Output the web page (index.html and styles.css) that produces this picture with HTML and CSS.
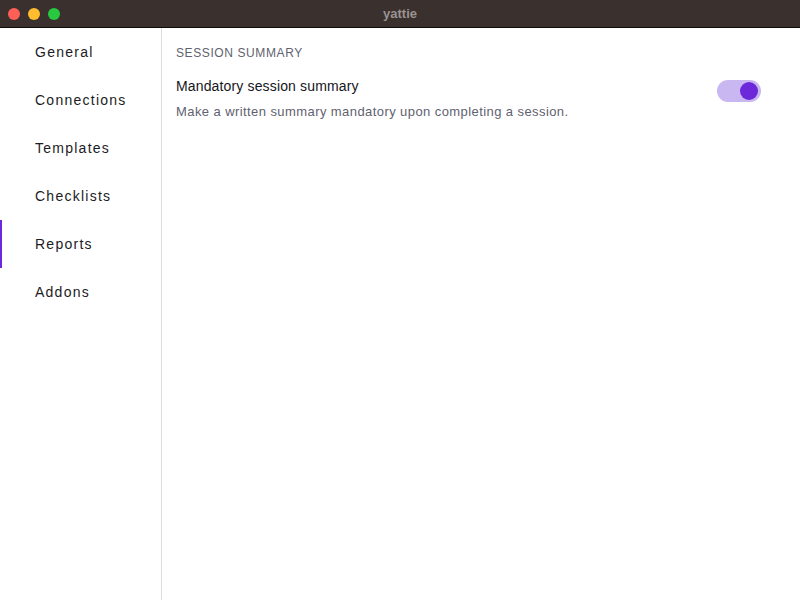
FILE: index.html
```html
<!DOCTYPE html>
<html>
<head>
<meta charset="utf-8">
<link rel="stylesheet" href="styles.css">
</head>
<body>
<div class="window">
  <div class="titlebar">
    <div class="lights">
      <span class="light red"></span>
      <span class="light yellow"></span>
      <span class="light green"></span>
    </div>
    <div class="title">yattie</div>
  </div>
  <div class="main">
    <nav class="sidebar">
      <div class="nav-item">General</div>
      <div class="nav-item">Connections</div>
      <div class="nav-item">Templates</div>
      <div class="nav-item">Checklists</div>
      <div class="nav-item active">Reports</div>
      <div class="nav-item">Addons</div>
    </nav>
    <section class="content">
      <h2 class="section-title">SESSION SUMMARY</h2>
      <div class="setting">
        <div class="setting-text">
          <div class="setting-label">Mandatory session summary</div>
          <div class="setting-desc">Make a written summary mandatory upon completing a session.</div>
        </div>
        <div class="toggle"><span class="knob"></span></div>
      </div>
    </section>
  </div>
</div>
</body>
</html>
```

FILE: styles.css
```css
* { box-sizing: border-box; }
html, body { margin: 0; padding: 0; }
body {
  width: 800px;
  height: 600px;
  overflow: hidden;
  font-family: "Liberation Sans", Arial, sans-serif;
  background: #ffffff;
}
.window {
  display: flex;
  flex-direction: column;
  height: 600px;
}
.titlebar {
  height: 28px;
  background: #3a302e;
  border-bottom: 1px solid #0d0b0b;
  display: flex;
  align-items: center;
  position: relative;
  flex-shrink: 0;
}
.lights {
  display: flex;
  gap: 8px;
  padding-left: 8px;
}
.light {
  width: 12px;
  height: 12px;
  border-radius: 50%;
  display: block;
}
.red { background: #fe5f57; }
.yellow { background: #febc2e; }
.green { background: #28c840; }
.title {
  position: absolute;
  left: 0;
  right: 0;
  top: 0;
  height: 27px;
  line-height: 28px;
  text-align: center;
  color: #9b9391;
  font-weight: bold;
  font-size: 13px;
}
.main {
  flex: 1;
  display: flex;
}
.sidebar {
  width: 162px;
  border-right: 1px solid #dcdcdc;
  flex-shrink: 0;
}
.nav-item {
  height: 48px;
  line-height: 49px;
  padding-left: 33px;
  font-size: 14px;
  letter-spacing: 1.25px;
  color: #1c1c24;
  border-left: 2px solid transparent;
}
.nav-item.active {
  border-left-color: #6d28d9;
}
.content {
  flex: 1;
  padding: 18px 39px 0 14px;
}
.section-title {
  margin: 0;
  font-size: 12px;
  font-weight: normal;
  letter-spacing: 0.6px;
  color: #5f6270;
  line-height: 14px;
}
.setting {
  display: flex;
  align-items: flex-start;
  justify-content: space-between;
  margin-top: 18px;
}
.setting-label {
  font-size: 14px;
  letter-spacing: 0.15px;
  color: #15151c;
  line-height: 16px;
}
.setting-desc {
  margin-top: 10px;
  font-size: 13px;
  letter-spacing: 0.42px;
  color: #5f6270;
  line-height: 16px;
}
.toggle {
  width: 44px;
  height: 22px;
  border-radius: 11px;
  background: #c8b7f0;
  position: relative;
  margin-top: 2px;
}
.knob {
  position: absolute;
  right: 3px;
  top: 2px;
  width: 18px;
  height: 18px;
  border-radius: 50%;
  background: #6d28d9;
}
```
